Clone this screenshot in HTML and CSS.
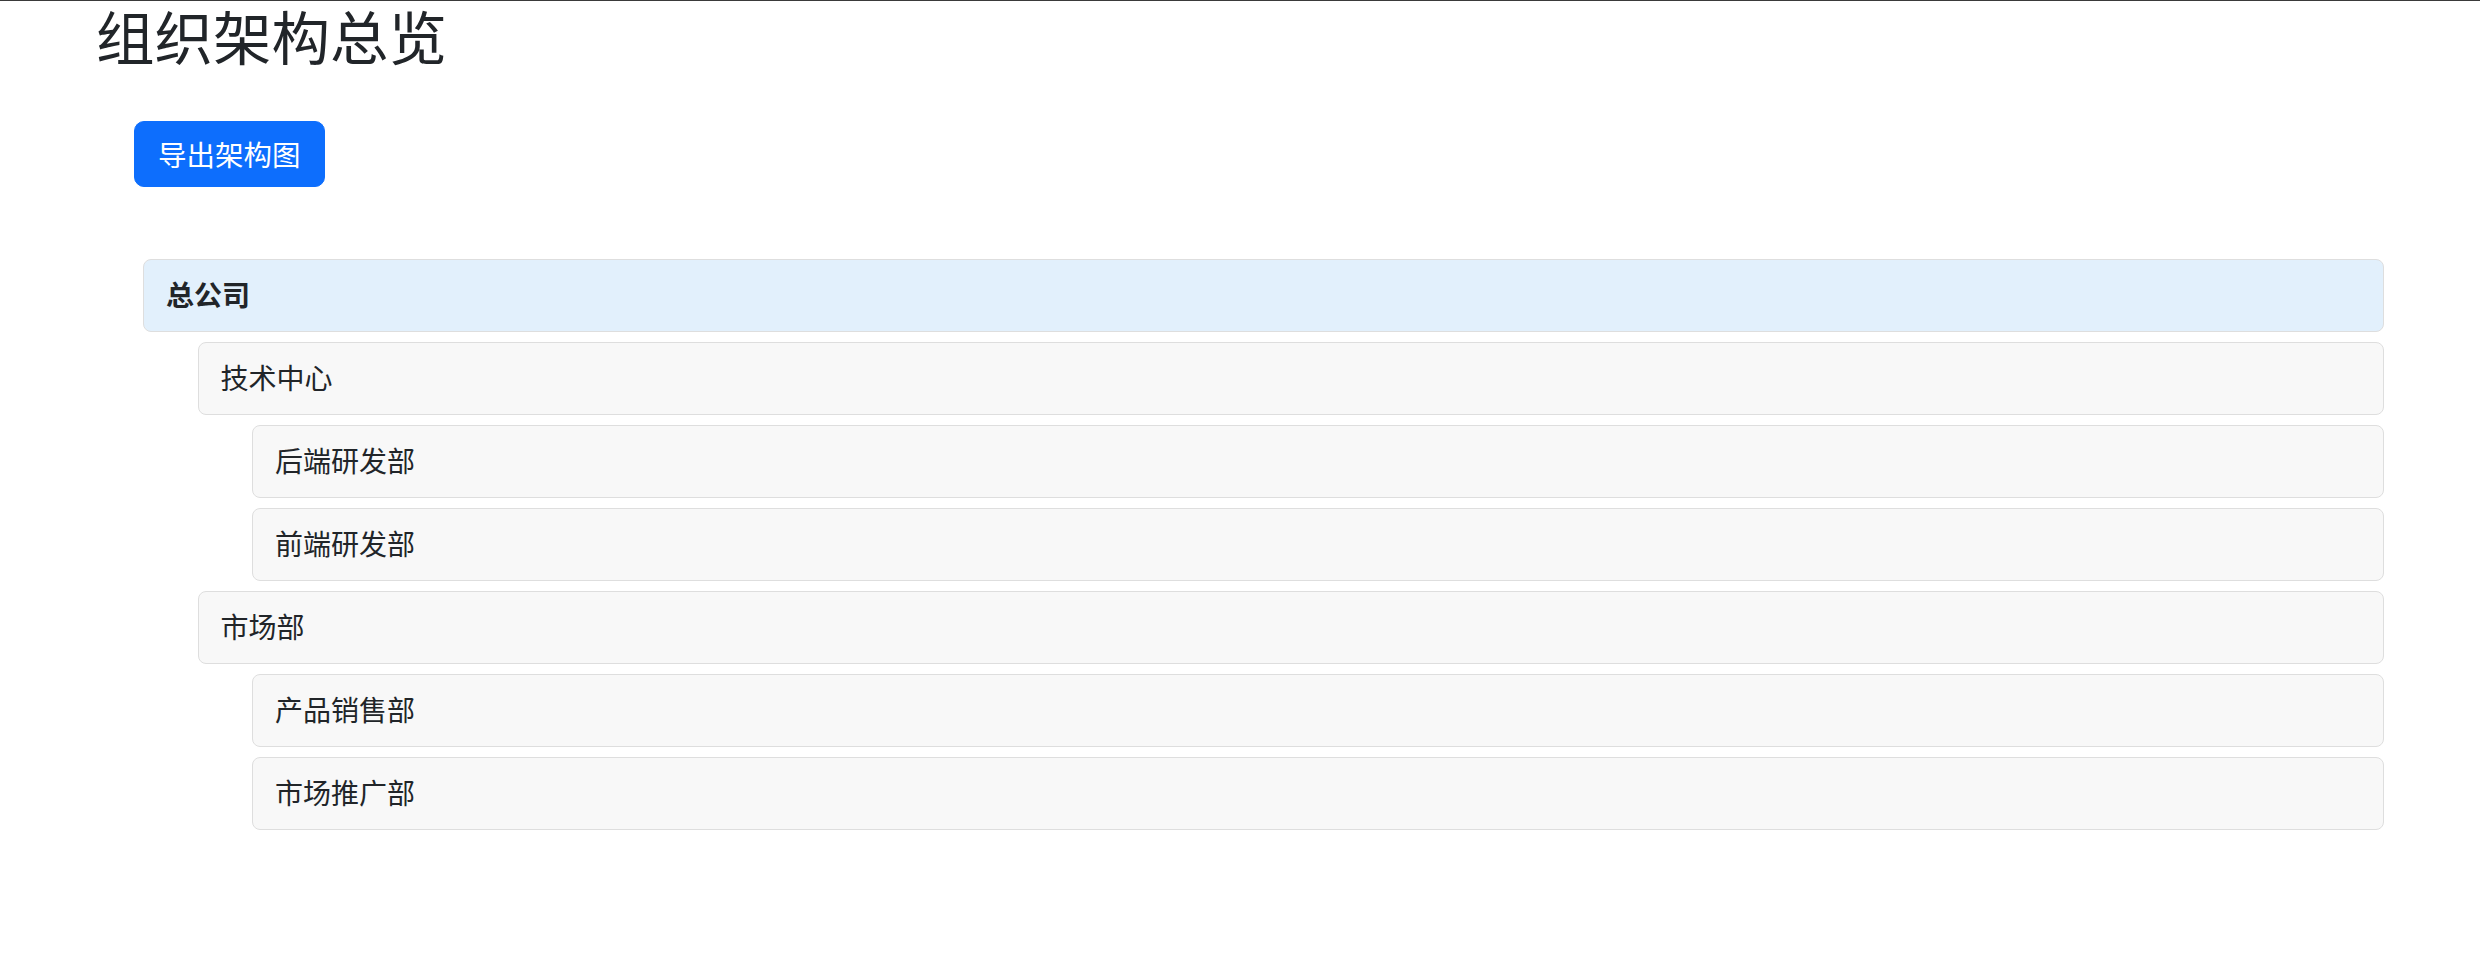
FILE: index.html
```html
<!DOCTYPE html>
<html lang="zh-CN">
<head>
<meta charset="utf-8">
<title>组织架构总览</title>
<link rel="stylesheet" href="styles.css">
</head>
<body>
<div class="page">
  <h1 class="title">组织架构总览</h1>
  <div class="toolbar">
    <button class="btn-primary" type="button">导出架构图</button>
  </div>
  <div class="tree">
    <div class="node node-root">总公司</div>
    <div class="children">
      <div class="node">技术中心</div>
      <div class="children">
        <div class="node">后端研发部</div>
        <div class="node">前端研发部</div>
      </div>
      <div class="node">市场部</div>
      <div class="children">
        <div class="node">产品销售部</div>
        <div class="node">市场推广部</div>
      </div>
    </div>
  </div>
</div>
</body>
</html>
```
FILE: styles.css
```css
html, body {
  margin: 0;
  padding: 0;
  background: #ffffff;
}
body {
  font-family: "Noto Sans CJK SC", "Noto Sans", "Liberation Sans", sans-serif;
  color: #212529;
  font-size: 28px;
  line-height: 42px;
}
.page {
  border-top: 1px solid #3a3a3a;
  padding: 0 96px 40px 96px;
}
.title {
  margin: 0;
  font-size: 58.5px;
  line-height: 68px;
  font-weight: 400;
  color: #212529;
}
.toolbar {
  margin-top: 52px;
  padding-left: 38px;
  display: flex;
}
.btn-primary {
  font-family: inherit;
  font-size: 28.5px;
  line-height: 42px;
  color: #ffffff;
  background: #0d6efd;
  border: 1px solid #0d6efd;
  border-radius: 10px;
  padding: 11px 23px;
  cursor: pointer;
}
.tree {
  margin-top: 72px;
  padding-left: 47px;
  display: flex;
  flex-direction: column;
  gap: 10px;
}
.children {
  padding-left: 54.5px;
  display: flex;
  flex-direction: column;
  gap: 10px;
}
.node {
  background: #f8f8f8;
  border: 1px solid #dedede;
  border-radius: 8px;
  padding: 12.5px 22px 16.5px 22px;
  font-size: 28px;
  line-height: 42px;
}
.node-root {
  background: #e2f0fc;
  font-weight: 700;
}
```
